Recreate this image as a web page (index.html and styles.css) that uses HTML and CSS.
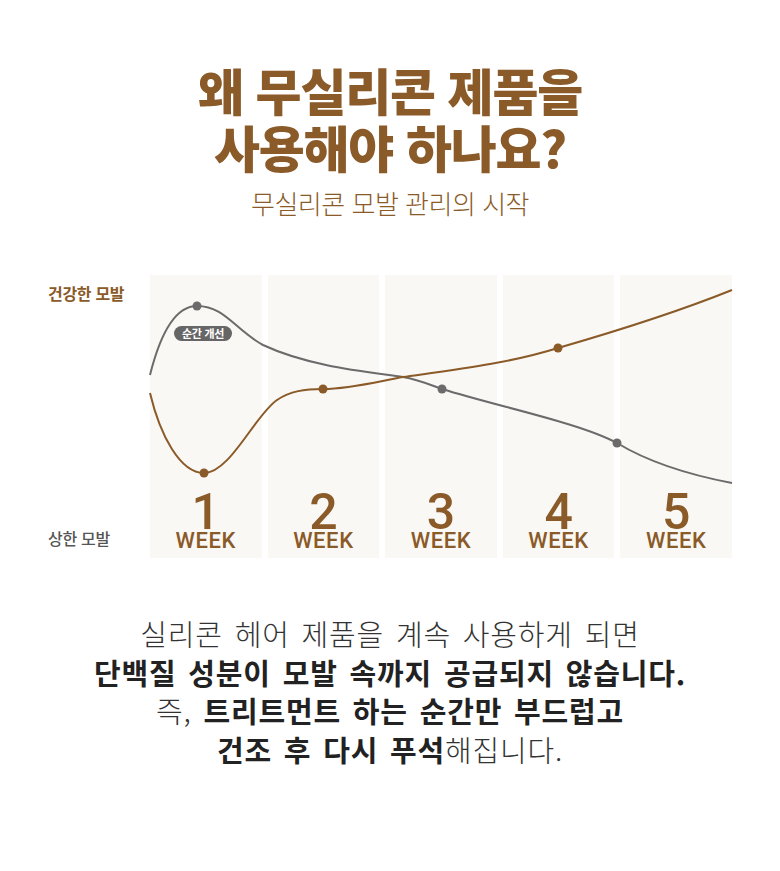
FILE: index.html
```html
<!DOCTYPE html>
<html lang="ko">
<head>
<meta charset="utf-8">
<link rel="stylesheet" href="styles.css">
</head>
<body>
<main class="page">
  <header class="intro">
    <h1 class="title">왜 무실리콘 제품을<br>사용해야 하나요?</h1>
    <p class="subtitle">무실리콘 모발 관리의 시작</p>
  </header>

  <section class="chart">
    <div class="axis">
      <span class="axis-top">건강한 모발</span>
      <span class="axis-bottom">상한 모발</span>
    </div>
    <div class="plot">
      <div class="weeks">
        <div class="week"><span class="num">1</span><span class="unit">WEEK</span></div>
        <div class="week"><span class="num">2</span><span class="unit">WEEK</span></div>
        <div class="week"><span class="num">3</span><span class="unit">WEEK</span></div>
        <div class="week"><span class="num">4</span><span class="unit">WEEK</span></div>
        <div class="week"><span class="num">5</span><span class="unit">WEEK</span></div>
      </div>
      <svg class="lines" viewBox="0 0 582 283" width="582" height="283" aria-hidden="true">
        <path class="gray" d="M0,100 C10,60 25,31 47,31 C75,31 85,55 113,70 C160,92 220,97 253,102 C270,105 280,110 292,114 C350,132 430,148 467,168 C500,188 540,200 582,208"/>
        <path class="brown" d="M0,118 C10,160 30,198 54,198 C80,198 105,140 127,125 C140,116 155,114 173,114 C200,114 230,106 253,102 C310,94 360,88 408,73 C460,58 520,40 582,15"/>
        <circle class="dot-gray" cx="47" cy="31" r="4.5"/>
        <circle class="dot-gray" cx="292" cy="114" r="4.5"/>
        <circle class="dot-gray" cx="467" cy="168" r="4.5"/>
        <circle class="dot-brown" cx="54" cy="198" r="4.5"/>
        <circle class="dot-brown" cx="173" cy="114" r="4.5"/>
        <circle class="dot-brown" cx="408" cy="73" r="4.5"/>
      </svg>
      <span class="badge">순간 개선</span>
    </div>
  </section>

  <section class="message">
    <p>실리콘 헤어 제품을 계속 사용하게 되면<br>
    <strong>단백질 성분이 모발 속까지 공급되지 않습니다.</strong><br>
    즉, <strong>트리트먼트 하는 순간만 부드럽고</strong><br>
    <strong>건조 후 다시 푸석</strong>해집니다.</p>
  </section>
</main>
</body>
</html>
```

FILE: styles.css
```css
* { box-sizing: border-box; }
html, body { margin: 0; padding: 0; background: #ffffff; }
body {
  font-family: "Noto Sans CJK KR", "Noto Sans", sans-serif;
  width: 780px;
  height: 871px;
  overflow: hidden;
}
.page { display: flex; flex-direction: column; align-items: stretch; }

.intro { text-align: center; padding-top: 61px; }
.title {
  margin: 0;
  font-size: 50px;
  line-height: 57px;
  font-weight: 800;
  color: #8a5a28;
  letter-spacing: -1.2px;
}
.subtitle {
  margin: 12px 0 0;
  font-size: 26px;
  line-height: 32px;
  font-weight: 300;
  color: #8a5a28;
  letter-spacing: -0.5px;
}

.chart {
  display: flex;
  margin-top: 56px;
  height: 283px;
}
.axis {
  width: 150px;
  padding: 6px 0 8px 48px;
  display: flex;
  flex-direction: column;
  justify-content: space-between;
  font-size: 16px;
  letter-spacing: -0.3px;
}
.axis-top { color: #8a5a28; font-weight: 700; }
.axis-bottom { color: #555555; font-weight: 500; }

.plot { position: relative; width: 582px; height: 283px; }
.weeks {
  display: grid;
  grid-template-columns: repeat(5, 1fr);
  gap: 6px;
  height: 100%;
}
.week {
  background: #faf8f5;
  display: flex;
  flex-direction: column;
  align-items: center;
  justify-content: flex-end;
  padding-bottom: 9px;
  color: #8a5a28;
  font-family: Roboto, "Noto Sans", sans-serif;
  font-weight: 500;
}
.num { font-size: 50px; line-height: 40px; }
.unit { font-size: 22px; line-height: 16px; margin-top: 1px; letter-spacing: 0.6px; }

.lines { position: absolute; left: 0; top: 0; overflow: visible; }
.lines path { fill: none; stroke-width: 2; }
.lines .gray { stroke: #6b6b6b; }
.lines .brown { stroke: #8a5a28; }
.dot-gray { fill: #6b6b6b; }
.dot-brown { fill: #8a5a28; }

.badge {
  position: absolute;
  left: 24px;
  top: 51px;
  width: 58px;
  height: 15px;
  border-radius: 8px;
  background: #666666;
  color: #ffffff;
  font-size: 11px;
  line-height: 15px;
  font-weight: 700;
  text-align: center;
  letter-spacing: -0.3px;
}

.message { text-align: center; margin-top: 56px; }
.message p {
  margin: 0;
  font-size: 29px;
  line-height: 38.5px;
  font-weight: 300;
  color: #333333;
  letter-spacing: 0.8px;
  word-spacing: 3px;
}
.message strong { font-weight: 700; color: #222222; }
```
